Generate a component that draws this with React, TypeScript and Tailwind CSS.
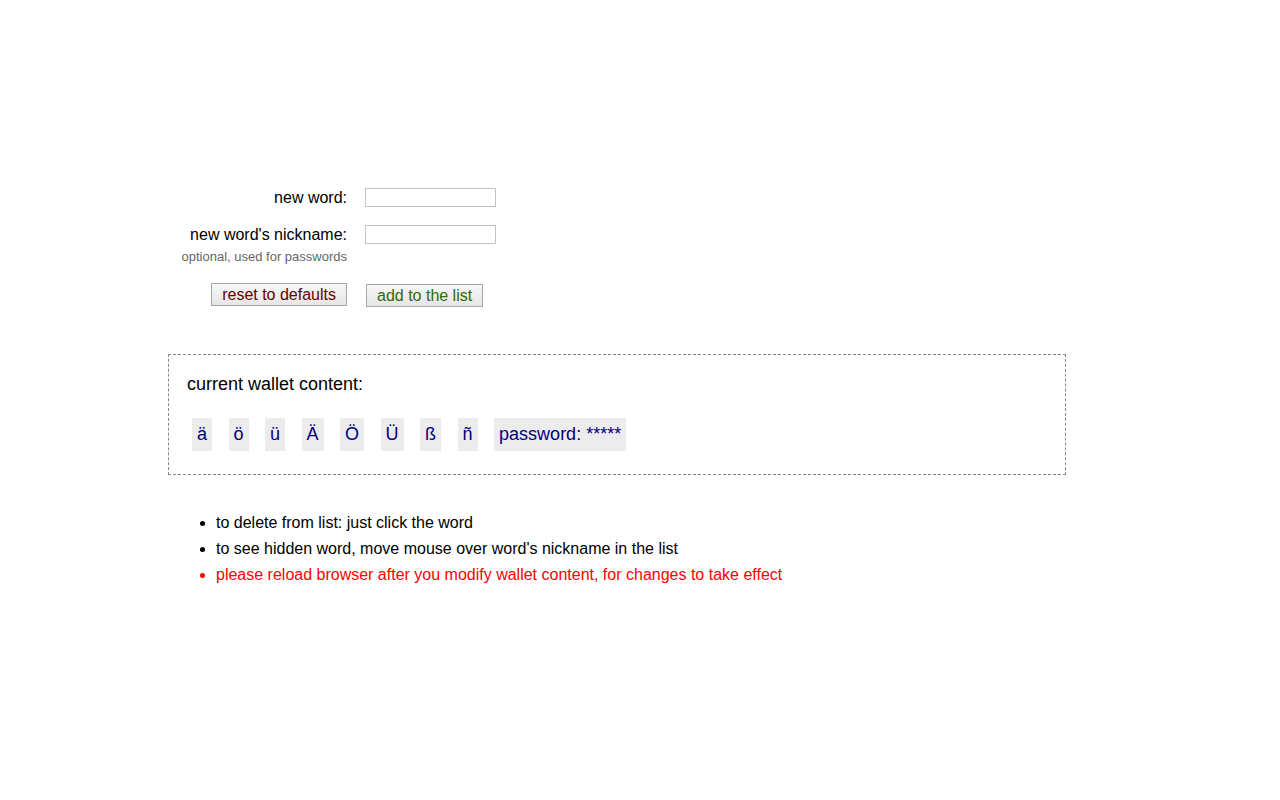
import React from "react";

export default function App() {
  const chips = ["ä", "ö", "ü", "Ä", "Ö", "Ü", "ß", "ñ", "password: *****"];
  return (
    <div
      className="min-h-[800px] w-full bg-white text-black"
      style={{ fontFamily: '"Liberation Sans", Arial, Helvetica, sans-serif' }}
    >
      <div className="pl-[168px] pt-[188px]">
        <div className="grid grid-cols-[179px_auto] gap-x-[18px]">
          <div className="text-right text-[16px] leading-[19px] h-[19px]">new word:</div>
          <div>
            <input className="block h-[19px] w-[131px] border border-[#c2c2c2] bg-white outline-none" />
          </div>

          <div className="mt-[18px] text-right">
            <div className="text-[16px] leading-[19px]">new word's nickname:</div>
            <div className="mt-[6px] text-[13px] leading-[14px] text-[#666666]">
              optional, used for passwords
            </div>
          </div>
          <div className="mt-[18px]">
            <input className="block h-[19px] w-[131px] border border-[#c2c2c2] bg-white outline-none" />
          </div>

          <div className="mt-[19px] flex justify-end">
            <button className="h-[23px] border border-[#a6a6a6] bg-gradient-to-b from-[#f7f7f7] to-[#e6e6e6] px-[10px] text-[16px] leading-[21px] text-[#660000]">
              reset to defaults
            </button>
          </div>
          <div className="mt-[20px]">
            <button className="ml-px h-[23px] border border-[#a6a6a6] bg-gradient-to-b from-[#f7f7f7] to-[#e6e6e6] px-[10px] text-[16px] leading-[21px] text-[#2e6b00]">
              add to the list
            </button>
          </div>
        </div>

        <div className="mt-[46px] w-[898px] border border-dashed border-[#888888] pl-[18px] pt-[19px] pb-[23px]">
          <div className="text-[18px] leading-[21px]">current wallet content:</div>
          <div className="mt-[23px] ml-[5px] flex gap-[16.5px]">
            {chips.map((c) => (
              <span
                key={c}
                className="h-[33px] bg-[#ececec] px-[5px] text-[18px] leading-[33px] text-[#000080]"
              >
                {c}
              </span>
            ))}
          </div>
        </div>

        <ul className="mt-[35px] list-disc pl-[48px] text-[16px] leading-[26px]">
          <li>to delete from list: just click the word</li>
          <li>to see hidden word, move mouse over word's nickname in the list</li>
          <li className="text-[#ff0000]">
            please reload browser after you modify wallet content, for changes to take effect
          </li>
        </ul>
      </div>
    </div>
  );
}
